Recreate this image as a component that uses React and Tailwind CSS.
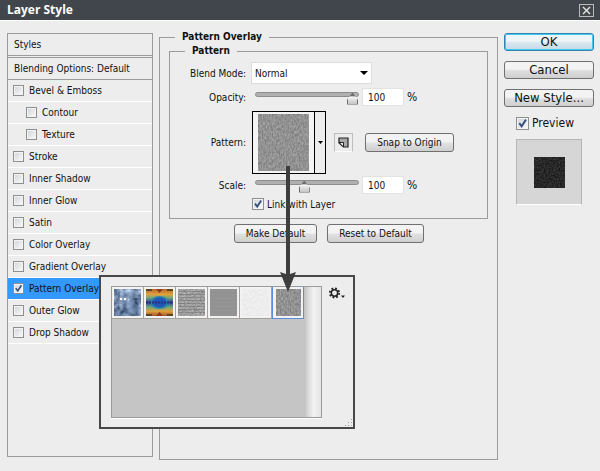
import React from "react";

const effects = [
  { name: "Bevel & Emboss" },
  { name: "Contour", nested: true },
  { name: "Texture", nested: true },
  { name: "Stroke" },
  { name: "Inner Shadow" },
  { name: "Inner Glow" },
  { name: "Satin" },
  { name: "Color Overlay" },
  { name: "Gradient Overlay" },
  { name: "Pattern Overlay", active: true },
  { name: "Outer Glow" },
  { name: "Drop Shadow" },
];

const smallButton =
  "h-[19px] rounded-[3px] border border-[#707070] bg-linear-to-b from-[#f3f3f3] from-45% via-[#e0e0e0] via-55% to-[#cfcfcf] text-center leading-4 whitespace-nowrap";
const sideButton =
  "h-[18px] w-full rounded-[3px] border border-[#707070] bg-linear-to-b from-[#f3f3f3] from-45% via-[#dedede] via-55% to-[#cfcfcf] text-[13px] leading-4 whitespace-nowrap";
const checkboxBase =
  "block shrink-0 appearance-none border border-[#8e8f8f] bg-linear-to-br from-[#cfd3d8] to-[#fbfbfb] shadow-[inset_0_0_0_1px_#f4f4f4]";

function Checkbox({ id, size = "size-3", ...props }) {
  return (
    <span className="relative inline-flex shrink-0">
      <input id={id} type="checkbox" className={`peer ${checkboxBase} ${size}`} {...props} />
      <svg
        viewBox="0 0 12 12"
        className="pointer-events-none absolute inset-0 hidden size-full peer-checked:block"
        aria-hidden="true"
      >
        <path d="M3 5.6 L5.2 8.6 L9.2 2.4" fill="none" stroke="#33507f" strokeWidth="1.8" />
      </svg>
    </span>
  );
}

function PatternDefs() {
  return (
    <svg className="absolute size-0" aria-hidden="true">
      <defs>
        <filter id="grain" x="0" y="0" width="100%" height="100%" colorInterpolationFilters="sRGB">
          <feTurbulence type="fractalNoise" baseFrequency="0.7 0.35" numOctaves="3" seed="4" />
          <feColorMatrix values="0.3 0 0 0 0.42  0.3 0 0 0 0.42  0.3 0 0 0 0.42  0 0 0 0 1" />
        </filter>
        <filter id="lines" x="0" y="0" width="100%" height="100%" colorInterpolationFilters="sRGB">
          <feTurbulence type="fractalNoise" baseFrequency="0.5 0.7" numOctaves="2" seed="9" />
          <feColorMatrix values="0.4 0 0 0 0.43  0.4 0 0 0 0.43  0.4 0 0 0 0.43  0 0 0 0 1" />
        </filter>
        <filter id="paper" x="0" y="0" width="100%" height="100%" colorInterpolationFilters="sRGB">
          <feTurbulence type="fractalNoise" baseFrequency="0.4" numOctaves="2" seed="2" />
          <feColorMatrix values="0.08 0 0 0 0.89  0.08 0 0 0 0.89  0.08 0 0 0 0.89  0 0 0 0 1" />
        </filter>
        <filter id="bubbles" x="0" y="0" width="100%" height="100%" colorInterpolationFilters="sRGB">
          <feTurbulence type="fractalNoise" baseFrequency="0.16" numOctaves="3" seed="6" />
          <feColorMatrix values="0.9 0 0 0 -0.02  0.9 0 0 0 0.07  0.9 0 0 0 0.2  0 0 0 0 1" />
        </filter>
        <filter id="asphalt" x="0" y="0" width="100%" height="100%" colorInterpolationFilters="sRGB">
          <feTurbulence type="fractalNoise" baseFrequency="0.6" numOctaves="2" seed="3" />
          <feColorMatrix values="0.25 0 0 0 0.03  0.25 0 0 0 0.03  0.25 0 0 0 0.03  0 0 0 0 1" />
        </filter>
        <linearGradient id="dye" x1="0" y1="0" x2="0" y2="1">
          <stop offset="0" stopColor="#b5622c" />
          <stop offset="0.2" stopColor="#e0a23c" />
          <stop offset="0.33" stopColor="#6fa77c" />
          <stop offset="0.5" stopColor="#2d3f98" />
          <stop offset="0.67" stopColor="#6fa77c" />
          <stop offset="0.82" stopColor="#e0a23c" />
          <stop offset="1" stopColor="#a5542a" />
        </linearGradient>
      </defs>
    </svg>
  );
}

function Texture({ kind, className }) {
  if (kind === "dye") {
    return (
      <svg viewBox="0 0 27 27" className={className}>
        <rect width="27" height="27" fill="url(#dye)" />
        <ellipse cx="13.5" cy="13.5" rx="9.5" ry="6.5" fill="#2c84a8" />
        <ellipse cx="13.5" cy="13.5" rx="7" ry="5" fill="#2456b8" />
        <path d="M0 13.5 H27" stroke="#272f78" strokeWidth="2" strokeDasharray="2 1" />
        <path d="M0 1 H6 M21 1 H27 M0 26 H6 M21 26 H27" stroke="#594526" strokeWidth="2" />
        <path d="M10 0 L13.5 4 L17 0 M10 27 L13.5 23 L17 27" fill="#8d3a20" />
      </svg>
    );
  }
  return (
    <svg className={className}>
      {kind === "grain" && <rect width="100%" height="100%" filter="url(#grain)" />}
      {kind === "asphalt" && <rect width="100%" height="100%" filter="url(#asphalt)" />}
      {kind === "paper" && <rect width="100%" height="100%" filter="url(#paper)" />}
      {kind === "flat" && (
        <>
          <rect width="27" height="27" fill="#929292" />
          <path
            d="M0 1.5 H27 M0 5.5 H27 M0 9.5 H27 M0 13.5 H27 M0 17.5 H27 M0 21.5 H27 M0 25.5 H27"
            stroke="#999"
            strokeDasharray="1 1"
          />
        </>
      )}
      {kind === "lines" && (
        <>
          <rect width="27" height="27" filter="url(#lines)" />
          <path
            d="M0 2.5 H27 M0 5.5 H27 M0 8.5 H27 M0 11.5 H27 M0 14.5 H27 M0 17.5 H27 M0 20.5 H27 M0 23.5 H27"
            stroke="#6e6e6e"
            strokeOpacity="0.5"
          />
        </>
      )}
      {kind === "bubbles" && (
        <>
          <rect width="27" height="27" filter="url(#bubbles)" />
          <circle cx="9" cy="11" r="5" fill="#7d96b8" fillOpacity="0.6" />
          <circle cx="20" cy="5" r="4.5" fill="#8fa5c4" fillOpacity="0.5" />
          <circle cx="18" cy="19" r="6" fill="#6a84a8" fillOpacity="0.5" />
          <circle cx="7" cy="10" r="1.3" fill="#fff" />
          <circle cx="11" cy="10" r="1.3" fill="#fff" />
        </>
      )}
    </svg>
  );
}

function Slider({ label, value }) {
  const id = label.toLowerCase();
  return (
    <div className="flex h-[18px] items-center">
      <label htmlFor={id} className="w-[77px] pr-px text-right">
        {label}:
      </label>
      <input
        id={id}
        type="range"
        defaultValue={value}
        className="ml-2 h-3 w-[104px] appearance-none self-start bg-transparent [&::-webkit-slider-runnable-track]:h-[5px] [&::-webkit-slider-runnable-track]:rounded-full [&::-webkit-slider-runnable-track]:border [&::-webkit-slider-runnable-track]:border-[#8d8d8d] [&::-webkit-slider-runnable-track]:bg-[#b0b0b0] [&::-webkit-slider-thumb]:h-[12px] [&::-webkit-slider-thumb]:w-[11px] [&::-webkit-slider-thumb]:appearance-none [&::-webkit-slider-thumb]:border [&::-webkit-slider-thumb]:border-[#6c6c6c] [&::-webkit-slider-thumb]:bg-linear-to-b [&::-webkit-slider-thumb]:from-[#6c6c6c] [&::-webkit-slider-thumb]:from-15% [&::-webkit-slider-thumb]:via-[#f4f4f4] [&::-webkit-slider-thumb]:via-30% [&::-webkit-slider-thumb]:to-[#c4c4c4] [&::-webkit-slider-thumb]:[clip-path:polygon(50%_0,100%_60%,100%_100%,0_100%,0_60%)]"
      />
      <input
        type="text"
        aria-label={`${label} percent`}
        defaultValue="100"
        className="ml-[3px] h-[18px] w-[42px] border border-[#e2e2e2] bg-white pl-[5px]"
      />
      <span className="ml-[3px] text-xs">%</span>
    </div>
  );
}

function StyleList() {
  return (
    <nav className="w-[146px] shrink-0 border border-[#9b9b9b]">
      <h2 className="h-[22px] border-b border-[#9b9b9b] pl-[6px] leading-[22px]">Styles</h2>
      <h3 className="mt-px h-[23px] border-y border-[#9b9b9b] pl-[6px] leading-[21px]">
        Blending Options: Default
      </h3>
      <ul>
        {effects.map((e) => (
          <li
            key={e.name}
            className={`flex h-[22px] items-center gap-[5px] border-b border-white pr-1 ${
              e.nested ? "pl-[18px]" : "pl-[5px]"
            } ${e.active ? "bg-[#3399ff]" : ""}`}
          >
            <Checkbox id={e.name} size="size-[11px]" defaultChecked={e.active} />
            <label htmlFor={e.name} className="whitespace-nowrap">
              {e.name}
            </label>
          </li>
        ))}
      </ul>
    </nav>
  );
}

function PatternSettings() {
  return (
    <fieldset className="min-w-0 flex-1 border border-[#9b9b9b] px-[9px]">
      <legend className="ml-[6px] h-[14px] px-[7px] leading-[14px] font-bold">Pattern Overlay</legend>
      <fieldset className="border border-[#9b9b9b]">
        <legend className="ml-[15px] h-[14px] px-[7px] leading-[14px] font-bold">Pattern</legend>
        <div className="flex flex-col pt-1 pb-[7px]">
          <div className="flex items-center">
            <label htmlFor="blend" className="w-[77px] pr-px text-right whitespace-nowrap">
              Blend Mode:
            </label>
            <div className="relative ml-[4px]">
              <select
                id="blend"
                className="block h-[22px] w-[121px] appearance-none border border-[#dcdcdc] bg-white pl-[3px]"
              >
                <option>Normal</option>
              </select>
              <svg viewBox="0 0 8 4" className="pointer-events-none absolute top-[9px] right-[4px] h-1 w-2">
                <path d="M0 0 H8 L4 4 Z" />
              </svg>
            </div>
          </div>
          <div className="mt-1">
            <Slider label="Opacity" value={100} />
          </div>
          <div className="mt-[5px] flex items-center">
            <span className="w-[77px] pr-px text-right">Pattern:</span>
            <button
              type="button"
              aria-label="Choose pattern"
              className="ml-[5px] flex h-[63px] w-[74px] border border-black"
            >
              <span className="flex h-full flex-1 items-center justify-center border-r border-black bg-[#f4f4f4]">
                <Texture kind="grain" className="h-[57px] w-[51px]" />
              </span>
              <span className="flex h-full w-[10px] items-center justify-center">
                <svg viewBox="0 0 5 3" className="h-[3px] w-[5px]">
                  <path d="M0 0 H5 L2.5 3 Z" />
                </svg>
              </span>
            </button>
            <button
              type="button"
              aria-label="Create preset"
              className="ml-2 flex size-[19px] items-center justify-center border border-[#bdbdbd] border-b-white"
            >
              <svg viewBox="0 0 11 11" className="size-[11px]">
                <path d="M1 1 H10 V10 H5.5 L1 6 Z" fill="#aaa" stroke="#222" strokeWidth="1.2" />
                <path d="M1 5.5 H5.5 V10 Z" fill="#eee" stroke="#222" />
              </svg>
            </button>
            <button type="button" className={`${smallButton} ml-3 w-[89px]`}>
              Snap to Origin
            </button>
          </div>
          <div className="mt-[2px]">
            <Slider label="Scale" value={47} />
          </div>
          <div className="mt-[3px] flex h-[14px] items-center gap-[3px] pl-[82px]">
            <Checkbox id="link" size="size-[12px]" defaultChecked />
            <label htmlFor="link">Link with Layer</label>
          </div>
        </div>
      </fieldset>
      <div className="mt-[5px] flex gap-[10px] pl-[65px]">
        <button type="button" className={`${smallButton} w-[83px]`}>
          Make Default
        </button>
        <button type="button" className={`${smallButton} w-[97px]`}>
          Reset to Default
        </button>
      </div>
    </fieldset>
  );
}

function PatternPicker() {
  const patterns = ["bubbles", "dye", "lines", "flat", "paper", "grain"];
  return (
    <section className="absolute top-[275px] left-[99px] flex h-[154px] w-[256px] border-2 border-[#484848] bg-[#ededed]">
      <div className="mt-[9px] ml-[10px] flex h-[132px] w-[211px] border border-[#9b9b9b] bg-[#c5c5c5] shadow-[0_1px_0_#fff]">
        <div className="flex w-[194px] shrink-0 items-start">
          {patterns.map((p) => (
            <button
              key={p}
              type="button"
              aria-label={p}
              className={`flex h-8 w-8 shrink-0 items-center justify-center border-r border-b bg-[#f2f2f2] ${
                p === "grain" ? "border-l border-[#5b8bdc]" : "border-[#a5a199]"
              }`}
            >
              <Texture kind={p} className={p === "grain" ? "h-[27px] w-[25px]" : "size-[27px]"} />
            </button>
          ))}
        </div>
        <div className="flex-1 bg-linear-to-r from-[#cfcfcf] via-[#f2f2f2] to-[#e4e4e4]" />
      </div>
      <button type="button" aria-label="Picker options" className="mt-[9px] ml-[7px] flex h-[14px] items-center">
        <svg viewBox="0 0 16 12" className="h-3 w-4">
          <circle cx="5.5" cy="6" r="3.2" fill="none" stroke="#222" strokeWidth="1.5" />
          <circle cx="5.5" cy="6" r="4.7" fill="none" stroke="#222" strokeWidth="1.8" strokeDasharray="1.85 1.84" />
          <path d="M12 8.5 H16 L14 11 Z" fill="#222" />
        </svg>
      </button>
      <svg viewBox="0 0 9 9" className="absolute right-0 bottom-0 size-[9px]">
        <path
          d="M7 1h1v1h-1z M7 4h1v1h-1z M4 4h1v1h-1z M7 7h1v1h-1z M4 7h1v1h-1z M1 7h1v1h-1z"
          fill="#a0a0a0"
        />
      </svg>
    </section>
  );
}

export default function App() {
  return (
    <div className="relative min-h-screen bg-[#ededed] text-[10px] text-[#111] font-[family-name:'DejaVu_Sans_Condensed','DejaVu_Sans',sans-serif]">
      <PatternDefs />
      <header className="flex h-5 items-center justify-between bg-[#40464b] pr-[6px] pl-[7px] shadow-[0_1px_0_#fff]">
        <h1 className="text-xs leading-5 font-bold text-white font-[family-name:'Open_Sans',sans-serif]">
          Layer Style
        </h1>
        <button type="button" aria-label="Close">
          <svg viewBox="0 0 15 13" className="h-[13px] w-[15px]">
            <rect x="0.5" y="0.5" width="14" height="12" fill="#45484b" stroke="#b9bbbd" />
            <path d="M4 3 L11 10 M11 3 L4 10" stroke="#e6e6e6" strokeWidth="1.4" />
          </svg>
        </button>
      </header>
      <main className="flex items-start pr-[6px] pl-[7px]">
        <div className="mt-[13px] flex h-[424px]">
          <StyleList />
        </div>
        <div className="mt-[10px] ml-[6px] flex h-[430px] min-w-0 flex-1">
          <PatternSettings />
        </div>
        <aside className="mt-[13px] ml-[6px] flex w-[90px] shrink-0 flex-col items-center gap-[10px]">
          <button
            type="button"
            className="h-[18px] w-full rounded-[3px] border border-[#2f86b0] bg-linear-to-b from-[#eef5f9] from-45% via-[#d6e6ee] via-55% to-[#c6dbe6] text-[13px] leading-4 shadow-[inset_0_0_0_1px_#41c8f0]"
          >
            OK
          </button>
          <button type="button" className={sideButton}>
            Cancel
          </button>
          <button type="button" className={sideButton}>
            New Style...
          </button>
          <div className="flex h-[12px] items-center gap-[3px] self-start pl-3">
            <Checkbox id="preview" size="size-[13px]" defaultChecked />
            <label htmlFor="preview" className="text-xs">
              Preview
            </label>
          </div>
          <div className="flex size-[66px] items-center justify-center border border-[#b5b5b5] border-b-white bg-[#d6d6d6]">
            <Texture kind="asphalt" className="size-[31px]" />
          </div>
        </aside>
      </main>
      <PatternPicker />
      <svg
        viewBox="0 0 16 126"
        className="pointer-events-none absolute top-[166px] left-[280px] h-[126px] w-4"
        aria-hidden="true"
      >
        <path d="M6 0 H10 V108 L16 106 L8 126 L0 106 L6 108 Z" fill="#3e3e3e" />
      </svg>
    </div>
  );
}
